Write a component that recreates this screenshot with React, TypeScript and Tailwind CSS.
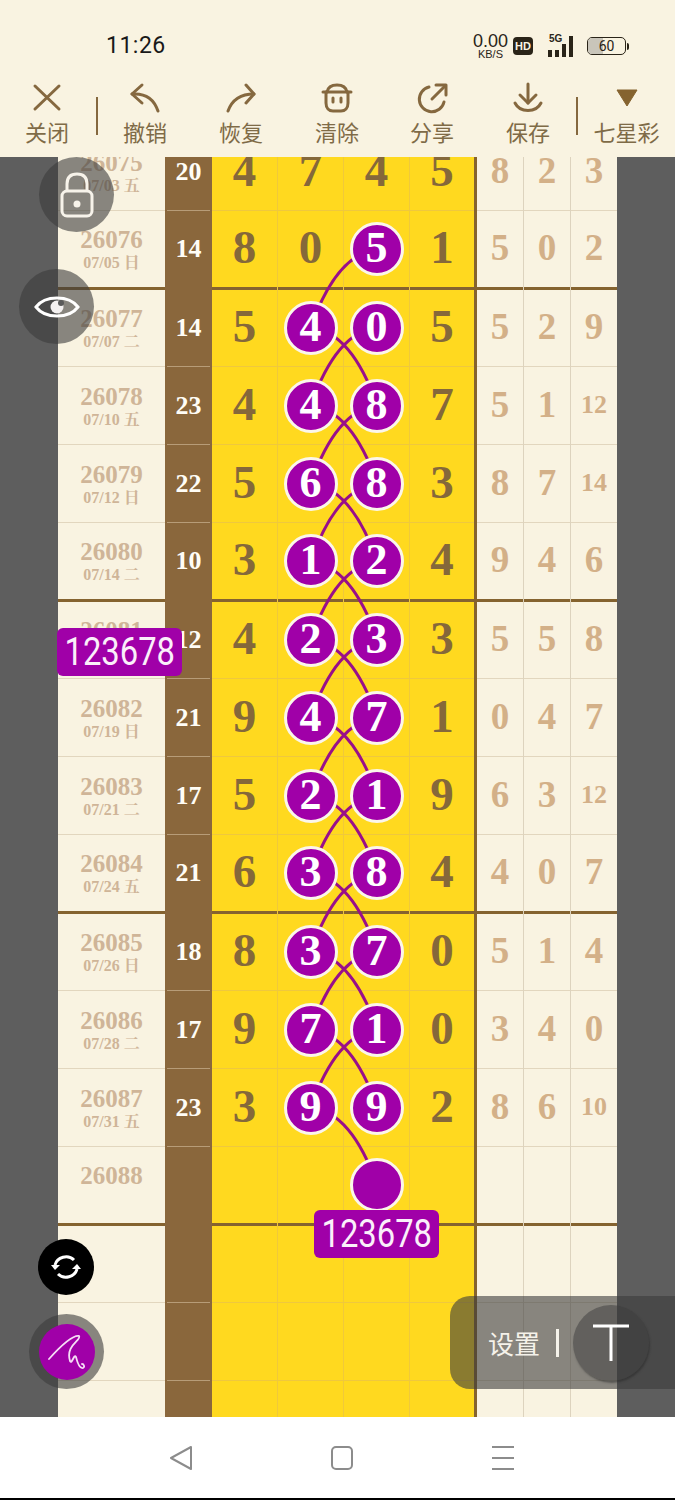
import React from "react";

type Row = { id: string; date: string; sum: string; a: string; b: string; c: string; d: string; r: string[]; balls?: number[]; thick?: boolean; emptyBall?: boolean };

const rows: Row[] = [
  { id: "26075", date: "07/03 五", sum: "20", a: "4", b: "7", c: "4", d: "5", r: ["8", "2", "3"] },
  { id: "26076", date: "07/05 日", sum: "14", a: "8", b: "0", c: "5", d: "1", r: ["5", "0", "2"], balls: [2], thick: true },
  { id: "26077", date: "07/07 二", sum: "14", a: "5", b: "4", c: "0", d: "5", r: ["5", "2", "9"], balls: [1, 2] },
  { id: "26078", date: "07/10 五", sum: "23", a: "4", b: "4", c: "8", d: "7", r: ["5", "1", "12"], balls: [1, 2] },
  { id: "26079", date: "07/12 日", sum: "22", a: "5", b: "6", c: "8", d: "3", r: ["8", "7", "14"], balls: [1, 2] },
  { id: "26080", date: "07/14 二", sum: "10", a: "3", b: "1", c: "2", d: "4", r: ["9", "4", "6"], balls: [1, 2], thick: true },
  { id: "26081", date: "07/17 五", sum: "12", a: "4", b: "2", c: "3", d: "3", r: ["5", "5", "8"], balls: [1, 2] },
  { id: "26082", date: "07/19 日", sum: "21", a: "9", b: "4", c: "7", d: "1", r: ["0", "4", "7"], balls: [1, 2] },
  { id: "26083", date: "07/21 二", sum: "17", a: "5", b: "2", c: "1", d: "9", r: ["6", "3", "12"], balls: [1, 2] },
  { id: "26084", date: "07/24 五", sum: "21", a: "6", b: "3", c: "8", d: "4", r: ["4", "0", "7"], balls: [1, 2], thick: true },
  { id: "26085", date: "07/26 日", sum: "18", a: "8", b: "3", c: "7", d: "0", r: ["5", "1", "4"], balls: [1, 2] },
  { id: "26086", date: "07/28 二", sum: "17", a: "9", b: "7", c: "1", d: "0", r: ["3", "4", "0"], balls: [1, 2] },
  { id: "26087", date: "07/31 五", sum: "23", a: "3", b: "9", c: "9", d: "2", r: ["8", "6", "10"], balls: [1, 2] },
  { id: "26088", date: "", sum: "", a: "", b: "", c: "", d: "", r: ["", "", ""], thick: true, emptyBall: true },
  { id: "", date: "", sum: "", a: "", b: "", c: "", d: "", r: ["", "", ""] },
  { id: "", date: "", sum: "", a: "", b: "", c: "", d: "", r: ["", "", ""] },
  { id: "", date: "", sum: "", a: "", b: "", c: "", d: "", r: ["", "", ""] },
];

const serif = "font-['Liberation_Serif','Noto_Serif_CJK_SC','Noto_Sans_CJK_SC',serif] font-bold";
const cjk = "font-['Noto_Sans_CJK_SC',sans-serif]";

function Ball({ v }: { v: string }) {
  return (
    <div className={`relative z-20 flex h-[54px] w-[54px] items-center justify-center rounded-full border-[3px] border-[#FBF6EA] bg-[#A000A8] pb-[2px] text-[44px] leading-none text-white ${serif}`}>
      {v}
    </div>
  );
}

function Cell({ thick, line, right, children, className = "" }: { thick?: boolean; line: string; right?: string; children?: React.ReactNode; className?: string }) {
  return (
    <div className={`flex h-full flex-col ${right ?? ""} ${className}`}>
      <div className="flex flex-1 items-center justify-center">{children}</div>
      {thick ? <div className="relative z-[5] h-[3px] translate-y-px bg-[#85632F]" /> : <div className={`h-px ${line}`} />}
    </div>
  );
}

function TableRow({ row }: { row: Row }) {
  const y = "bg-[#FFD91F]";
  const yLine = "bg-[#EFC83E]";
  const yDigit = `-translate-y-px text-[47px] leading-none text-[#85683A] ${serif}`;
  const rDigit = `-translate-y-px leading-none text-[#D3B088] ${serif}`;
  const mid = (v: string, i: number) =>
    row.balls?.includes(i) ? <Ball v={v} /> : row.emptyBall && i === 2 ? <Ball v="" /> : <span className={yDigit}>{v}</span>;
  return (
    <div className="grid h-[78px] grid-cols-[107px_47px_66px_66px_66px_67px_47px_47px_46px]">
      <Cell thick={row.thick} line="bg-[#E2D6BE]" className="bg-[#F9F3E1]">
        <div className="flex flex-col items-center">
          <span className={`text-[25px] leading-[28px] text-[#CFB598] ${serif}`}>{row.id}</span>
          {row.id && <span className={`h-[18px] text-[16px] leading-[18px] text-[#CFB598] ${serif}`}>{row.date}</span>}
        </div>
      </Cell>
      <div className="flex h-full flex-col bg-[#8A673C]">
        <div className={`flex flex-1 items-center justify-center text-[26px] leading-none text-[#FFFDF6] ${serif}`}>{row.sum}</div>
        {row.thick ? <div className="h-[3px]" /> : <div className="mx-[2px] h-px bg-[#B79C78]" />}
      </div>
      <Cell thick={row.thick} line={yLine} right="border-r border-r-[#F0C93A]" className={y}><span className={yDigit}>{row.a}</span></Cell>
      <Cell thick={row.thick} line={yLine} right="border-r border-r-[#F0C93A]" className={y}>{mid(row.b, 1)}</Cell>
      <Cell thick={row.thick} line={yLine} right="border-r border-r-[#F0C93A]" className={y}>{mid(row.c, 2)}</Cell>
      <Cell thick={row.thick} line={yLine} right="border-r-[3px] border-r-[#85632F]" className={y}><span className={yDigit}>{row.d}</span></Cell>
      {row.r.map((v, i) => (
        <Cell key={i} thick={row.thick} line="bg-[#E2D6BE]" right={i < 2 ? "border-r border-r-[#DDD3BE]" : ""} className="bg-[#F9F3E1]">
          <span className={`${rDigit} ${v.length > 1 ? "text-[26px]" : "text-[37px]"}`}>{v}</span>
        </Cell>
      ))}
    </div>
  );
}

const L = 311, R = 377;
function curves() {
  const out: string[] = [];
  const ys = (k: number) => 249 + 78 * k;
  out.push(`M${R} ${ys(0)} Q336 ${ys(0) + 6} ${L} ${ys(1)}`);
  for (let k = 1; k < 11; k++) {
    const a = ys(k), b = ys(k + 1);
    out.push(`M${L} ${a} Q352 ${a + 6} ${R} ${b}`);
    out.push(`M${R} ${a} Q336 ${a + 6} ${L} ${b}`);
  }
  out.push(`M${L} ${ys(11)} Q352 ${ys(11) + 6} ${R} ${ys(12)}`);
  return out;
}

function ToolIcon({ children }: { children: React.ReactNode }) {
  return (
    <svg width="32" height="32" viewBox="0 0 32 32" fill="none" stroke="#85683F" strokeWidth="3" strokeLinecap="round" strokeLinejoin="round">
      {children}
    </svg>
  );
}

function Tool({ label, w, children }: { label: string; w: string; children: React.ReactNode }) {
  return (
    <div className={`flex flex-col items-center ${w}`}>
      <div className="flex h-[36px] items-center justify-center">{children}</div>
      <span className={`text-[22px] leading-[30px] text-[#7F6B47] ${cjk}`}>{label}</span>
    </div>
  );
}

function Label({ className }: { className: string }) {
  return (
    <div className={`absolute z-30 flex h-[48px] w-[125px] items-center justify-center rounded-[6px] bg-[#A000A8] font-['Roboto',sans-serif] text-[39px] leading-none text-[#FBEFFA] ${className}`}>
      <span className="inline-block scale-x-[.84]">123678</span>
    </div>
  );
}

export default function App() {
  return (
    <div className="relative flex h-[1500px] w-[675px] flex-col overflow-hidden bg-white">
      <header className="h-[157px] shrink-0 bg-[#F9F3E1]">
        <div className="flex h-[78px] items-end justify-between pb-[19px] pl-[106px] pr-[46px]">
          <span className="font-['Roboto',sans-serif] text-[23px] leading-[26px] tracking-[0.5px] text-[#191919]">11:26</span>
          <div className="flex items-center text-[#2A2418]">
            <div className="mr-[5px] flex flex-col items-center font-['Liberation_Sans',sans-serif] leading-none">
              <span className="text-[18px] leading-[16px]">0.00</span>
              <span className="text-[11px] leading-[10px]">KB/S</span>
            </div>
            <div className="mr-[8px] flex h-[18px] w-[20px] items-center justify-center rounded-[4px] bg-[#2A2418] font-['Liberation_Sans',sans-serif] text-[11px] font-bold leading-none text-[#F9F3E1]">HD</div>
            <div className="relative mr-[9px] h-[22px] w-[37px]">
              <span className="absolute left-[8px] top-[-1px] font-['Liberation_Sans',sans-serif] text-[10px] font-bold leading-none">5G</span>
              <div className="absolute bottom-0 left-[7px] flex items-end gap-[3px]">
                <div className="h-[7px] w-[4px] bg-[#2A2418]" />
                <div className="h-[7px] w-[4px] bg-[#2A2418]" />
                <div className="h-[13px] w-[4px] bg-[#2A2418]" />
                <div className="h-[21px] w-[4px] bg-[#2A2418]" />
              </div>
            </div>
            <div className="flex items-center">
              <div className="relative flex h-[18px] w-[39px] items-center justify-center overflow-hidden rounded-[5px] border border-[#2A2418] font-['Roboto',sans-serif] text-[14px] leading-none">
                <div className="absolute bottom-0 left-0 top-0 w-[15px] bg-[#C9C5BA]" />
                <span className="relative">60</span>
              </div>
              <div className="ml-[1px] h-[7px] w-[2px] rounded-r bg-[#2A2418]" />
            </div>
          </div>
        </div>
        <div className="flex items-start pt-[2px]">
          <Tool label="关闭" w="w-[94px]">
            <ToolIcon><path d="M4 4 L28 27 M28 4 L4 27" /></ToolIcon>
          </Tool>
          <div className="ml-[2px] mt-[17px] h-[38px] w-[2px] bg-[#85683F]" />
          <Tool label="撤销" w="w-[94px]">
            <ToolIcon><path d="M13 3 L3 12 L13 21" /><path d="M3 12 C16 11 25 17 29 29" /></ToolIcon>
          </Tool>
          <Tool label="恢复" w="w-[98px]">
            <ToolIcon><path d="M21 3 L29 12 L21 21" /><path d="M29 12 C16 12 7 18 3 29" /></ToolIcon>
          </Tool>
          <Tool label="清除" w="w-[94px]">
            <ToolIcon>
              <path d="M2 10 H30" />
              <path d="M6 10 C7 5 11 3 16 3 C21 3 25 5 26 10" />
              <path d="M5 10 V21 C5 26 8 29 12 29 H20 C24 29 27 26 27 21 V10" />
              <path d="M12 16 V20 M20 16 V20" />
            </ToolIcon>
          </Tool>
          <Tool label="分享" w="w-[96px]">
            <ToolIcon>
              <path d="M13 5 A12.5 12.5 0 1 0 28 20" />
              <path d="M16 17 L29 4" />
              <path d="M20 3 H30 V13" />
            </ToolIcon>
          </Tool>
          <Tool label="保存" w="w-[96px]">
            <ToolIcon>
              <path d="M16 2 V21" />
              <path d="M8 13 L16 21 L24 13" />
              <path d="M3 21 C8 31 24 31 29 21" />
            </ToolIcon>
          </Tool>
          <div className="mt-[17px] h-[38px] w-[2px] bg-[#85683F]" />
          <Tool label="七星彩" w="w-[97px]">
            <svg width="22" height="18" viewBox="0 0 22 18"><path d="M1 1 H21 L11 17 Z" fill="#85632F" stroke="#85632F" strokeLinejoin="round" /></svg>
          </Tool>
        </div>
      </header>

      <main className="h-[1260px] shrink-0 overflow-hidden bg-[#5E5E5E] px-[58px]">
        <div className="-mt-[24px] w-[559px]">
          {rows.map((r, i) => <TableRow key={i} row={r} />)}
        </div>
      </main>

      <footer className="flex flex-1 items-center justify-center gap-[129px] border-b-[2px] border-b-black bg-white pl-[9px]">
        <svg width="32" height="30" viewBox="0 0 32 30" fill="none" stroke="#8C8C8C" strokeWidth="2" strokeLinejoin="round"><path d="M26 4 L6 15 L26 26 Z" /></svg>
        <svg width="32" height="30" viewBox="0 0 32 30" fill="none" stroke="#8C8C8C" strokeWidth="2"><rect x="6" y="4" width="20" height="22" rx="4" /></svg>
        <svg width="32" height="30" viewBox="0 0 32 30" fill="none" stroke="#8C8C8C" strokeWidth="2"><path d="M5 4 H27 M5 15 H27 M5 26 H27" /></svg>
      </footer>

      <svg className="pointer-events-none absolute left-0 top-0 z-10" width="675" height="1417" viewBox="0 0 675 1417" fill="none" stroke="#990F8A" strokeWidth="3">
        {curves().map((d, i) => <path key={i} d={d} />)}
      </svg>

      <Label className="left-[57px] top-[628px]" />
      <Label className="left-[314px] top-[1210px]" />

      {/* lock */}
      <div className="absolute left-[39px] top-[157px] z-30 flex h-[75px] w-[75px] items-center justify-center rounded-full bg-[#3C3C3C]/60">
        <svg width="36" height="48" viewBox="0 0 36 48" fill="none" stroke="#F7F3EA" strokeWidth="3"><rect x="3" y="20" width="30" height="25" rx="5" /><path d="M8 20 V13 C8 6 12 3 18 3 C24 3 28 6 28 13 V20" /><circle cx="18" cy="33" r="3.5" fill="#F7F3EA" stroke="none" /></svg>
      </div>
      {/* eye */}
      <div className="absolute left-[19px] top-[269px] z-30 flex h-[75px] w-[75px] items-center justify-center rounded-full bg-[#3C3C3C]/60">
        <svg width="46" height="30" viewBox="0 0 46 30" fill="none" stroke="#FFFFFF" strokeWidth="3"><path d="M2 15 C11 3 35 3 44 15 C35 27 11 27 2 15 Z" /><circle cx="23" cy="15" r="6.5" fill="#F3F0F0" stroke="none" /><circle cx="27" cy="11" r="3" fill="#5A5A5A" stroke="none" /></svg>
      </div>
      {/* sync */}
      <div className="absolute left-[38px] top-[1239px] z-30 flex h-[56px] w-[56px] items-center justify-center rounded-full bg-black">
        <svg width="32" height="32" viewBox="0 0 32 32" fill="none" stroke="#FFFFFF" strokeWidth="3"><path d="M5 14 C7 6 18 3 24 9" /><path d="M27 18 C25 26 14 29 8 23" /><path d="M1 14 L5 19 L10 14 Z" fill="#FFFFFF" stroke="none" /><path d="M31 18 L27 13 L22 18 Z" fill="#FFFFFF" stroke="none" /></svg>
      </div>
      {/* pen */}
      <div className="absolute left-[29px] top-[1314px] z-30 flex h-[75px] w-[75px] items-center justify-center rounded-full bg-[#3C3C3C]/60">
        <div className="flex h-[56px] w-[56px] items-center justify-center rounded-full bg-[#A000A8]">
          <svg width="38" height="42" viewBox="0 0 38 42" fill="none" stroke="#F5DDF5" strokeWidth="1.8" strokeLinecap="round"><path d="M1 28 C10 18 24 4 31 5 C34 9 17 14 22 30 C24 34 26 22 28 26 C29 30 31 38 35 37 C37 36 36 33 34 33" /></svg>
        </div>
      </div>
      {/* settings */}
      <div className="absolute left-[450px] top-[1296px] z-30 flex h-[93px] w-[225px] items-center rounded-l-[20px] bg-[#3C3C3C]/60 pl-[38px]">
        <span className={`text-[26px] leading-none text-[#F5F2EA] ${cjk}`}>设置</span>
        <div className="ml-[16px] h-[28px] w-[3px] bg-[#F5F2EA]" />
        <div className="ml-[14px] flex h-[76px] w-[76px] items-center justify-center rounded-full bg-[#3C3C3C]/50 shadow-[1px_2px_2px_rgba(40,40,40,0.5)]">
          <svg width="36" height="38" viewBox="0 0 36 38" fill="none" stroke="#FFFFFF" strokeWidth="3"><path d="M0 2 H36 M18 2 V37" /></svg>
        </div>
      </div>
    </div>
  );
}
